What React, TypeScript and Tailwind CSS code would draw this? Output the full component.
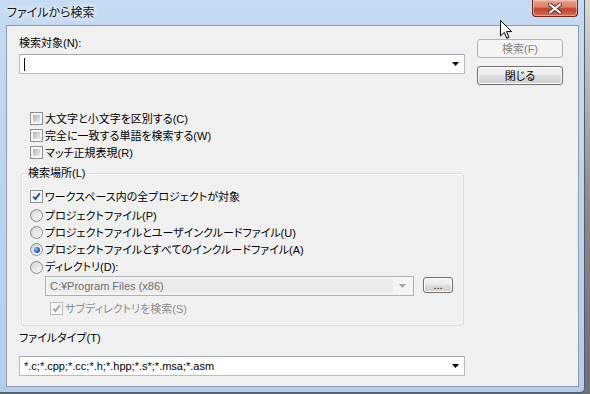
import React from "react";

const jp = "font-['Liberation_Sans','Noto_Sans_CJK_JP',sans-serif] [font-feature-settings:'palt']";

function CheckBox({ checked = false, disabled = false }: { checked?: boolean; disabled?: boolean }) {
  return (
    <span
      className={`relative w-[13px] h-[13px] shrink-0 border ${
        disabled ? "border-[#bcbcbc]" : "border-[#8e8f8f]"
      } bg-[#f6f6f6] p-[2px] flex`}
    >
      <span
        className={`flex-1 ${
          checked
            ? disabled
              ? "bg-[#f2f2f2]"
              : "bg-gradient-to-br from-[#e9ecef] to-[#ffffff]"
            : "bg-gradient-to-br from-[#aeb3ba] to-[#ececec]"
        }`}
      />
      {checked && (
        <svg className="absolute left-0 top-0" width="11" height="11" viewBox="0 0 11 11">
          <path
            d="M2.2 5.6 L4.4 8 L8.8 2.4"
            fill="none"
            stroke={disabled ? "#a8a8a8" : "#2a4c9a"}
            strokeWidth="1.9"
          />
        </svg>
      )}
    </span>
  );
}

function Radio({ checked = false }: { checked?: boolean }) {
  return (
    <span className="w-[13px] h-[13px] shrink-0 rounded-full border border-[#8e8f8f] bg-gradient-to-br from-[#c9ccd1] to-[#fbfbfb] flex items-center justify-center">
      <span className="w-[9px] h-[9px] rounded-full bg-gradient-to-br from-[#d6d9dd] to-[#f7f7f7] flex items-center justify-center">
        {checked && (
          <span className="w-[6px] h-[6px] rounded-full bg-[radial-gradient(circle_at_35%_35%,#8cc6f5_0%,#1b63c6_55%,#0b3a86_100%)]" />
        )}
      </span>
    </span>
  );
}

function Arrow({ color = "#000" }: { color?: string }) {
  return (
    <svg width="7" height="4" viewBox="0 0 7 4" className="shrink-0">
      <polygon points="0,0 7,0 3.5,4" fill={color} />
    </svg>
  );
}

function Combo({ text, caret = false }: { text?: string; caret?: boolean }) {
  return (
    <div className="h-[20px] flex items-center bg-white border border-[#b5bcc6] border-t-[#a4aab3] rounded-[1px] pl-[4px] pr-[5px]">
      <div className="flex-1 flex items-center text-[11px] leading-[14px] whitespace-nowrap">
        {caret && <span className="w-[1px] h-[13px] bg-black" />}
        {text}
      </div>
      <Arrow />
    </div>
  );
}

function Button({ label, disabled = false, className = "" }: { label: string; disabled?: boolean; className?: string }) {
  return (
    <div
      className={`flex items-center justify-center rounded-[3px] border ${
        disabled
          ? "border-[#adb2b5] bg-[#f4f4f4] text-[#838383]"
          : "border-[#707070] bg-[linear-gradient(to_bottom,#f2f2f2_0%,#ebebeb_50%,#dddddd_50%,#cfcfcf_100%)] text-black shadow-[inset_0_0_0_1px_#fcfcfc]"
      } text-[11px] leading-[14px] ${className}`}
    >
      {label}
    </div>
  );
}

function Row({ children, h = "h-[17px]", className = "" }: { children: React.ReactNode; h?: string; className?: string }) {
  return <div className={`flex items-center ${h} ${className}`}>{children}</div>;
}

function Label({ children, disabled = false }: { children: React.ReactNode; disabled?: boolean }) {
  return (
    <span className={`ml-[2px] text-[11px] leading-[14px] whitespace-nowrap ${disabled ? "text-[#8d8d8d]" : "text-black"}`}>
      {children}
    </span>
  );
}

export default function App() {
  return (
    <div className={`relative w-[590px] h-[394px] flex bg-gradient-to-b from-[#d9d9d9] via-[#8c8c8c] to-[#6f6f6f] overflow-hidden text-[11px] ${jp}`}>
      <div className="w-[585px] h-[393px] flex flex-col bg-gradient-to-b from-[#c6dbf3] via-[#bbd4ee] to-[#b4ceea] border-r border-b border-[#4f5d6c] rounded-br-[5px] pl-[6px] pr-[5px] pb-[5px]">
        {/* Title bar */}
        <div className="h-[25px] flex items-start shrink-0">
          <div className="pt-[5px] pl-[1px] text-[12px] leading-[14px] text-[#111] font-['Noto_Sans_CJK_JP',sans-serif] [text-shadow:0_0_5px_#ffffff,0_0_8px_#ffffff]">
            ファイルから検索
          </div>
          <div className="ml-auto mr-[1px] w-[46px] h-[17px] rounded-b-[4px] border border-t-0 border-[#6a2419] bg-[linear-gradient(to_bottom,#e9a796_0%,#dc7a64_45%,#c4432c_55%,#d1705a_100%)] flex items-center justify-center shadow-[inset_0_0_0_1px_rgba(255,220,210,0.5)]">
            <svg width="14" height="11" viewBox="0 0 14 11">
              <path d="M2 1.5 L12 9.5 M12 1.5 L2 9.5" stroke="#3b3b3b" strokeWidth="4" strokeLinecap="round" />
              <path d="M2 1.5 L12 9.5 M12 1.5 L2 9.5" stroke="#ffffff" strokeWidth="2.2" strokeLinecap="round" />
            </svg>
          </div>
        </div>

        {/* Client */}
        <div className="flex-1 border border-[#8e9bab] bg-[#f0f0f0] flex pl-[12px]">
          {/* Left column */}
          <div className="w-[446px] flex flex-col pt-[10px]">
            <div className="h-[14px] text-[11px] leading-[14px]">検索対象(N):</div>
            <div className="mt-[4px]">
              <Combo caret />
            </div>

            <div className="mt-[36px] ml-[11px] flex flex-col">
              <Row>
                <CheckBox />
                <Label>大文字と小文字を区別する(C)</Label>
              </Row>
              <Row>
                <CheckBox />
                <Label>完全に一致する単語を検索する(W)</Label>
              </Row>
              <Row>
                <CheckBox />
                <Label>マッチ正規表現(R)</Label>
              </Row>
            </div>

            {/* Group box */}
            <div className="relative mt-[12px] ml-[2px] mr-[1px] h-[153px] border border-[#d5dfe5] rounded-[3px] shadow-[inset_1px_1px_0_#ffffff] pt-[14px] pb-[8px] pl-[8px] flex flex-col">
              <div className="absolute -top-[8px] left-[5px] px-[1px] bg-[#f0f0f0] text-[11px] leading-[14px]">
                検索場所(L)
              </div>
              <Row>
                <CheckBox checked />
                <Label>ワークスペース内の全プロジェクトが対象</Label>
              </Row>
              <Row className="mt-[2px]">
                <Radio />
                <Label>プロジェクトファイル(P)</Label>
              </Row>
              <Row>
                <Radio />
                <Label>プロジェクトファイルとユーザインクルードファイル(U)</Label>
              </Row>
              <Row>
                <Radio checked />
                <Label>プロジェクトファイルとすべてのインクルードファイル(A)</Label>
              </Row>
              <Row h="h-[18px]">
                <Radio />
                <Label>ディレクトリ(D):</Label>
              </Row>
              <div className="flex items-start ml-[15px]">
                <div className="w-[369px] h-[20px] border border-[#adb2b5] bg-[#f4f4f4] flex items-center p-[2px]">
                  <div className="flex-1 h-full bg-[#ececec] flex items-center pl-[2px] text-[11px] leading-[14px] text-[#6d6d6d] whitespace-nowrap">
                    C:¥Program Files (x86)
                  </div>
                  <div className="w-[18px] flex items-center justify-center">
                    <Arrow color="#a5a5a5" />
                  </div>
                </div>
                <Button label="..." className="ml-[9px] mt-[1px] w-[30px] h-[16px] !leading-[8px] !items-end pb-[3px]" />
              </div>
              <Row className="mt-[4px] ml-[20px]">
                <CheckBox checked disabled />
                <Label disabled>サブディレクトリを検索(S)</Label>
              </Row>
            </div>

            <div className="mt-[5px] h-[14px] text-[11px] leading-[14px]">ファイルタイプ(T)</div>
            <div className="mt-[11px]">
              <Combo text="*.c;*.cpp;*.cc;*.h;*.hpp;*.s*;*.msa;*.asm" />
            </div>
          </div>

          {/* Right column */}
          <div className="w-[86px] ml-[12px] pt-[13px] flex flex-col gap-[8px]">
            <Button label="検索(F)" disabled className="h-[19px]" />
            <Button label="閉じる" className="h-[19px]" />
          </div>
        </div>
      </div>

      {/* Mouse cursor */}
      <svg className="absolute left-[500px] top-[20px]" width="13" height="20" viewBox="0 0 13 20">
        <path
          d="M0.5 0.5 L0.5 16 L4.3 12.4 L6.8 18.3 L9 17.4 L6.6 11.6 L11.6 11.6 Z"
          fill="#ffffff"
          stroke="#000000"
          strokeWidth="1"
          strokeLinejoin="round"
        />
      </svg>
    </div>
  );
}
